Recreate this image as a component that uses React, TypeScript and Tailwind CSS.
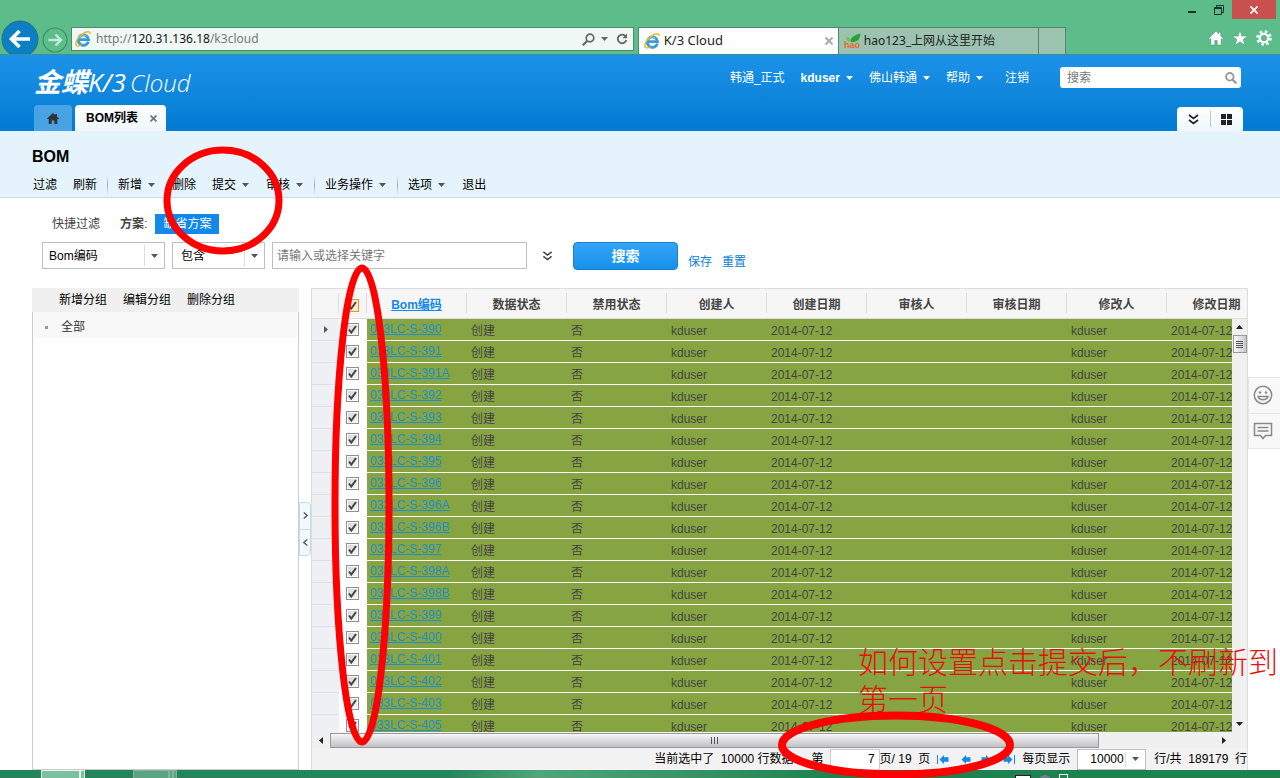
import React from "react";
import clsx from "clsx";

const bomCodes = [
  "033LC-S-390",
  "033LC-S-391",
  "033LC-S-391A",
  "033LC-S-392",
  "033LC-S-393",
  "033LC-S-394",
  "033LC-S-395",
  "033LC-S-396",
  "033LC-S-396A",
  "033LC-S-396B",
  "033LC-S-397",
  "033LC-S-398A",
  "033LC-S-398B",
  "033LC-S-399",
  "033LC-S-400",
  "033LC-S-401",
  "033LC-S-402",
  "033LC-S-403",
  "033LC-S-405",
];

const columns = [
  "数据状态",
  "禁用状态",
  "创建人",
  "创建日期",
  "审核人",
  "审核日期",
  "修改人",
  "修改日期",
];

const rowValues = ["创建", "否", "kduser", "2014-07-12", "", "", "kduser", "2014-07-12"];

const Caret = ({ className = "" }: { className?: string }) => (
  <svg
    className={clsx("h-1 w-[7px] shrink-0", className)}
    viewBox="0 0 7 4"
    fill="currentColor"
  >
    <path d="M0 0h7L3.5 4z" />
  </svg>
);

const DoubleChevron = ({ className = "" }: { className?: string }) => (
  <svg
    className={className}
    viewBox="0 0 11 11"
    fill="none"
    stroke="currentColor"
    strokeWidth="1.7"
  >
    <path d="M1 1l4.5 3.4L10 1M1 6l4.5 3.4L10 6" />
  </svg>
);

const IeLogo = () => (
  <svg className="h-4 w-4 shrink-0" viewBox="0 0 16 16" fill="none">
    <path
      d="M13.4 10.6A5.2 5.2 0 1 1 13.6 8.6H4.2"
      stroke="#3a9bd9"
      strokeWidth="2.8"
    />
    <path d="M4.4 6.6a4.4 4.4 0 0 1 7-1.6" stroke="#8fd0f2" strokeWidth="1" />
    <path
      d="M1.6 14.6C-.6 12.6 2.4 6.8 7 3.4 11 .4 15.6-.4 15 3.2"
      stroke="#e9b824"
      strokeWidth="1.5"
    />
    <path d="M1.4 14.2c1 1.2 3 .8 5-.4" stroke="#e9b824" strokeWidth="1.3" />
  </svg>
);

const HaoLogo = () => (
  <svg className="h-4 w-[17px] shrink-0" viewBox="0 0 17 16">
    <path d="M6.5 9C6 4.500 10 2 16.500.5 16.500 6 13 9.800 6.500 9z" fill="#2ba33c" />
    <path d="M7 9C3.500 9 2 7 2 3.500 5.500 4 7.200 6 7 9z" fill="#7cc242" />
    <text
      x="0"
      y="15"
      fontSize="9"
      fontWeight="bold"
      fontFamily="Liberation Sans, sans-serif"
      fill="#e8662a"
    >
      hao
    </text>
  </svg>
);

/* Browser window frame: caption buttons, address bar, tabs */
const BrowserChrome = () => (
  <div className="flex shrink-0 flex-col bg-[#5cbd8b] font-['Noto_Sans','Noto_Sans_CJK_SC',sans-serif] text-[13px] text-[#222]">
    <div className="flex h-[19px] justify-end pr-1">
      <button aria-label="最小化" className="flex w-[26px] items-end justify-center pb-[6px]">
        <span className="h-[2px] w-2 bg-[#1d2f26]" />
      </button>
      <button aria-label="还原" className="flex w-[27px] items-center justify-center">
        <svg className="h-[10px] w-[10px]" viewBox="0 0 10 10" fill="none" stroke="#1d2f26">
          <path d="M.5 2.500h7v7h-7zM.5 3.500h7M2.500 2V.5h7v7H8" />
        </svg>
      </button>
      <button
        aria-label="关闭"
        className="flex w-[44px] items-center justify-center bg-[#c8504f]"
      >
        <svg className="h-2 w-2" viewBox="0 0 8 8" stroke="#fff" strokeWidth="1.700">
          <path d="M.5.5l7 7M7.500.5l-7 7" />
        </svg>
      </button>
    </div>
    <div className="flex h-9 items-end overflow-hidden border-b border-[#3c8f8d] pl-[1px]">
      <button aria-label="后退" className="h-[34px] w-[38px] shrink-0">
        <svg className="h-[38px] w-[38px]" viewBox="0 0 38 38">
          <circle cx="19" cy="19" r="18" fill="#0b7fc4" stroke="#2b6f78" />
          <path
            d="M29 19H11M18.500 11l-8 8 8 8"
            fill="none"
            stroke="#fff"
            strokeWidth="3.600"
          />
        </svg>
      </button>
      <button aria-label="前进" className="ml-[3px] h-[28px] w-[26px] shrink-0">
        <svg className="h-[26px] w-[26px]" viewBox="0 0 26 26" fill="none">
          <circle cx="13" cy="13" r="12" stroke="#3d8f69" strokeWidth="1.200" />
          <path
            d="M6.500 13h12M13.500 7.500l5.500 5.500-5.500 5.500"
            stroke="#c5ead6"
            strokeWidth="2.400"
          />
        </svg>
      </button>
      <div className="mb-[3px] ml-[3px] flex h-[24px] w-[44%] items-center border border-[#4f8a6d] bg-[#eff8f4] px-[3px]">
        <IeLogo />
        <span className="ml-[5px] flex-1 text-xs text-[#777]">
          http://<span className="text-[#111]">120.31.136.18</span>/k3cloud
        </span>
        <svg
          className="h-[13px] w-[13px]"
          viewBox="0 0 13 13"
          fill="none"
          stroke="#666"
          strokeWidth="1.700"
        >
          <circle cx="8" cy="5" r="3.800" />
          <path d="M5.300 7.800L.8 12.300" strokeWidth="2.200" />
        </svg>
        <Caret className="mx-[6px] text-[#666]" />
        <svg
          className="mx-[2px] h-3 w-3"
          viewBox="0 0 12 12"
          fill="none"
          stroke="#666"
          strokeWidth="1.800"
        >
          <path d="M9.600 3.400A4.300 4.300 0 1 0 10.300 7" />
          <path d="M11 .5v4.800H6.300z" fill="#666" stroke="none" />
        </svg>
      </div>
      <div className="ml-1 flex h-[27px] w-[201px] items-center border-x border-t border-[#4f8a6d] bg-white px-[5px]">
        <IeLogo />
        <span className="ml-[4px] flex-1">K/3 Cloud</span>
        <button aria-label="关闭标签">
          <svg className="h-2 w-2" viewBox="0 0 8 8" stroke="#aaa" strokeWidth="2">
            <path d="M.5.5l7 7M7.500.5l-7 7" />
          </svg>
        </button>
      </div>
      <div className="flex h-[27px] w-[200px] items-center border-r border-t border-[#4f8a6d] bg-[#9cc3af] px-[5px] text-xs">
        <HaoLogo />
        <span className="ml-[3px]">hao123_上网从这里开始</span>
      </div>
      <div className="h-[27px] w-[27px] border-r border-t border-[#4f8a6d] bg-[#9cc3af]" />
      <div className="mb-2 ml-auto mr-2 flex gap-2 text-white">
        <svg className="h-4 w-4" viewBox="0 0 16 16" fill="currentColor" stroke="#3f8f69" strokeWidth=".5">
          <path d="M8 1L.8 8.200l1.200 1.200.8-.7V15h4v-4.500h2.400V15h4V8.700l.8.7 1.200-1.200-2.400-2.400V2.200h-2v1.600z" />
        </svg>
        <svg className="h-4 w-4" viewBox="0 0 16 16" fill="currentColor" stroke="#3f8f69" strokeWidth=".5">
          <path d="M8 .5l2 5.500h5.700l-4.500 3.500 1.700 5.700L8 11.800l-4.900 3.400 1.700-5.700L.3 6H6z" />
        </svg>
        <svg className="h-4 w-4" viewBox="0 0 16 16" fill="none" stroke="currentColor">
          <circle cx="8" cy="8" r="4.200" strokeWidth="2.200" />
          <circle cx="8" cy="8" r="6.500" strokeWidth="2.600" strokeDasharray="2.600 2.500" />
        </svg>
      </div>
    </div>
  </div>
);

const AppHeader = () => (
  <header className="shrink-0 bg-linear-to-b from-[#1c93e8] to-[#007bd1] pl-[34px] pr-[37px] text-white">
    <div className="flex h-[50px] items-center">
      <div className="flex items-baseline pt-1 font-['Open_Sans','Noto_Sans_CJK_SC',sans-serif] text-2xl italic leading-7">
        <span className="font-bold text-[27px]">金蝶</span>
        <span className="text-[26px] font-medium">K/3</span>
        <span className="ml-1 font-light">Cloud</span>
      </div>
      <nav className="ml-auto flex h-8 items-center gap-4 pb-[5px]">
        <span>韩通_正式</span>
        <button className="flex items-center font-bold">
          kduser
          <Caret className="ml-[6px]" />
        </button>
        <button className="flex items-center">
          佛山韩通
          <Caret className="ml-[6px]" />
        </button>
        <button className="flex items-center">
          帮助
          <Caret className="ml-[6px]" />
        </button>
        <a href="#logout" className="ml-[6px]">
          注销
        </a>
      </nav>
      <label className="mb-[5px] ml-[31px] mr-[2px] flex h-[21px] w-[181px] items-center rounded-[3px] bg-white pl-[7px] pr-1">
        <input
          type="text"
          aria-label="搜索"
          placeholder="搜索"
          className="min-w-0 flex-1 text-xs text-[#555] outline-none placeholder:text-[#777]"
        />
        <svg
          className="h-3 w-3"
          viewBox="0 0 12 12"
          fill="none"
          stroke="#999"
          strokeWidth="1.800"
        >
          <circle cx="4.800" cy="4.800" r="3.800" />
          <path d="M7.600 7.600L11.500 11.500" strokeWidth="2.200" />
        </svg>
      </label>
    </div>
    <div className="flex h-[26px] items-stretch">
      <button
        aria-label="主页"
        className="flex w-[38px] items-center justify-center rounded-t bg-[#48a3e4]"
      >
        <svg className="h-[11px] w-3" viewBox="0 0 12 11" fill="#333">
          <path d="M6 0L0 5.500l.8.8.9-.6V11h3V7.500h2.600V11h3V5.700l.9.600.8-.8-2-1.800V1H8.300v1.200z" />
        </svg>
      </button>
      <div className="ml-[3px] flex w-[91px] items-center rounded-t bg-linear-to-b from-white to-[#eef7fc] pl-[11px] font-bold text-black">
        BOM列表
        <button aria-label="关闭BOM列表" className="ml-3">
          <svg className="h-[7px] w-[7px]" viewBox="0 0 7 7" stroke="#777" strokeWidth="1.800">
            <path d="M.5.5l6 6M6.500.5l-6 6" />
          </svg>
        </button>
      </div>
      <div className="ml-auto mt-[2px] flex w-[66px] items-center rounded-t bg-linear-to-b from-white to-[#eef7fc] text-[#222]">
        <button aria-label="展开" className="flex flex-1 justify-center">
          <DoubleChevron className="h-[11px] w-[11px]" />
        </button>
        <span className="h-4 w-px bg-[#b9c3cb]" />
        <button aria-label="应用" className="flex flex-1 justify-center">
          <svg className="h-[11px] w-[11px]" viewBox="0 0 11 11" fill="currentColor">
            <path d="M0 0h5v5H0zM6 0h5v5H6zM0 6h5v5H0zM6 6h5v5H6z" />
          </svg>
        </button>
      </div>
    </div>
  </header>
);

const ToolButton = ({ label, menu = false }: { label: string; menu?: boolean }) => (
  <button className="flex items-center px-2">
    {label}
    {menu && <Caret className="ml-[6px] mr-px text-[#555]" />}
  </button>
);

const ToolDivider = () => (
  <span className="mx-[2px] h-5 w-px bg-linear-to-b from-transparent via-[#9aa9b4] to-transparent" />
);

const Toolbar = () => (
  <div className="shrink-0 border-b border-[#c5dbee] bg-[#e5f4fc] pb-1 pl-[25px] pt-[14px] text-black">
    <h1 className="px-[7px] text-base font-bold leading-6">BOM</h1>
    <div className="flex h-6 items-center pt-2">
      <ToolButton label="过滤" />
      <ToolButton label="刷新" />
      <ToolDivider />
      <ToolButton label="新增" menu />
      <ToolButton label="删除" />
      <ToolButton label="提交" menu />
      <ToolButton label="审核" menu />
      <ToolDivider />
      <ToolButton label="业务操作" menu />
      <ToolDivider />
      <ToolButton label="选项" menu />
      <ToolButton label="退出" />
    </div>
  </div>
);

type DropProps = {
  label: string;
  value: string;
  className: string;
  selectClass?: string;
};

const Drop = ({ label, value, className, selectClass = "" }: DropProps) => (
  <div className={clsx("relative border border-[#bfbfbf] bg-white", className)}>
    <select
      aria-label={label}
      className={clsx("h-full w-full appearance-none text-black outline-none", selectClass)}
    >
      <option>{value}</option>
    </select>
    <span className="pointer-events-none absolute inset-y-[2px] right-0 flex w-5 items-center justify-center border-l border-[#ddd]">
      <Caret className="text-[#555]" />
    </span>
  </div>
);

const FilterPanel = () => (
  <div className="shrink-0 pb-[18px] pl-[42px] pt-4">
    <div className="flex h-5 items-center pl-[10px] text-[#444]">
      <span>快捷过滤</span>
      <span className="ml-5">
        <b>方案</b>:
      </span>
      <button className="ml-2 h-5 bg-[#1188ea] px-2 text-white">缺省方案</button>
    </div>
    <div className="mt-2 flex h-7 items-start">
      <Drop label="字段" value="Bom编码" className="h-[27px] w-[123px]" selectClass="pl-[6px]" />
      <Drop
        label="条件"
        value="包含"
        className="ml-[7px] h-[27px] w-[93px]"
        selectClass="pl-2"
      />
      <input
        type="text"
        aria-label="关键字"
        placeholder="请输入或选择关键字"
        className="ml-[7px] h-[27px] w-[255px] border border-[#bfbfbf] px-1 outline-none placeholder:text-[#777]"
      />
      <button aria-label="更多条件" className="mx-[15px] self-center text-[#444]">
        <DoubleChevron className="h-[10px] w-[11px]" />
      </button>
      <button className="ml-[5px] h-7 w-[105px] rounded border border-[#1580d0] bg-linear-to-b from-[#33a4f5] to-[#1591ec] text-sm font-bold text-white">
        搜索
      </button>
      <a href="#save" className="ml-[10px] pt-3 text-[#1080d8]">
        保存
      </a>
      <a href="#reset" className="ml-[10px] pt-3 text-[#1080d8]">
        重置
      </a>
    </div>
  </div>
);

const GroupPanel = () => (
  <aside className="flex w-[267px] shrink-0 flex-col">
    <div className="flex h-6 items-center gap-4 bg-[#f0f0f0] pl-[27px] text-black">
      <button>新增分组</button>
      <button>编辑分组</button>
      <button>删除分组</button>
    </div>
    <div className="flex-1 border-x border-b border-[#ccc] px-px">
      <div className="flex h-[26px] items-center bg-[#f8f8f8] pl-[11px] pt-1 text-[#333]">
        <span className="mr-[13px] h-[3px] w-[3px] bg-[#999]" />
        全部
      </div>
    </div>
  </aside>
);

const Splitter = () => (
  <div className="flex w-[12px] shrink-0 flex-col items-stretch justify-center">
    <div className="flex h-[54px] flex-col rounded-r border border-[#c3dceb] bg-[#f1f9fe] text-[#555]">
      <button aria-label="展开分组" className="flex flex-1 items-center justify-center">
        <svg className="h-[7px] w-[5px]" viewBox="0 0 5 7" fill="none" stroke="currentColor" strokeWidth="1.300">
          <path d="M.7.5l3.500 3-3.500 3" />
        </svg>
      </button>
      <span className="h-px bg-[#c3dceb]" />
      <button aria-label="收起分组" className="flex flex-1 items-center justify-center">
        <svg className="h-[7px] w-[5px]" viewBox="0 0 5 7" fill="none" stroke="currentColor" strokeWidth="1.300">
          <path d="M4.300.5L.8 3.500l3.500 3" />
        </svg>
      </button>
    </div>
  </div>
);

const CheckBox = ({ label, head = false }: { label: string; head?: boolean }) => (
  <span className="relative block h-[13px] w-[13px]">
    <input
      type="checkbox"
      aria-label={label}
      defaultChecked
      className={clsx(
        "block h-[13px] w-[13px] appearance-none border",
        head
          ? "border-[#e0962e] bg-[#fdeccb]"
          : "border-[#8e8f8f] bg-linear-to-br from-[#cfd3d8] to-[#f8f8f8] ring-1 ring-inset ring-white",
      )}
    />
    <svg
      className="pointer-events-none absolute inset-0 h-[13px] w-[13px]"
      viewBox="0 0 13 13"
      fill="none"
      stroke="#444"
      strokeWidth="2"
    >
      <path d="M3 6.500l2.300 3L10 3" />
    </svg>
  </span>
);

const HeadCell = ({ children }: { children?: React.ReactNode }) => (
  <th className="h-[29px] border-b border-[#ddd] bg-[#f6f6f6] p-0 align-middle">
    <div className="flex h-5 items-center justify-center border-r border-[#ddd] pt-1">
      {children}
    </div>
  </th>
);

const BomTable = () => (
  <table className="w-[955px] table-fixed border-collapse text-left text-[#444]">
    <colgroup>
      <col className="w-[27px]" />
      <col className="w-[28px]" />
      <col className="w-[100px]" />
      {columns.map((name) => (
        <col key={name} className="w-[100px]" />
      ))}
    </colgroup>
    <thead>
      <tr>
        <HeadCell />
        <HeadCell>
          <CheckBox label="全选" head />
        </HeadCell>
        <HeadCell>
          <a href="#sort" className="text-[#1188ea] underline">
            Bom编码
          </a>
        </HeadCell>
        {columns.map((name) => (
          <HeadCell key={name}>{name}</HeadCell>
        ))}
      </tr>
    </thead>
    <tbody>
      {bomCodes.map((code, index) => (
        <tr key={code} className="h-[22px] border-b border-white bg-[#86a441]">
          <td className="border-b border-[#dcdfe6] bg-[#eef0f4] p-0">
            {index === 0 && (
              <svg className="mx-auto h-[7px] w-1" viewBox="0 0 4 7" fill="#556">
                <path d="M0 0l4 3.500L0 7z" />
              </svg>
            )}
          </td>
          <td className="border-b border-dashed border-[#ddd] bg-white p-0 pl-[7px]">
            <CheckBox label={code} />
          </td>
          <td className="p-0 pl-[3px] leading-5">
            <a href="#bom" className="text-[#1f8fc4] underline">
              {code}
            </a>
          </td>
          {rowValues.map((value, i) => (
            <td key={i} className="whitespace-nowrap p-0 pl-1 pt-[3px] leading-[18px]">
              {value}
            </td>
          ))}
        </tr>
      ))}
    </tbody>
  </table>
);

const VerticalScroll = () => (
  <div className="absolute bottom-0 right-0 top-[30px] flex w-[15px] flex-col items-center bg-[#f0f0f0]">
    <svg className="my-[6px] h-1 w-[7px]" viewBox="0 0 7 4" fill="#222">
      <path d="M0 4h7L3.500 0z" />
    </svg>
    <div className="flex h-[18px] w-[14px] flex-col items-center justify-center gap-px border border-[#999] bg-linear-to-r from-[#fafafa] to-[#c9c9cd]">
      <span className="h-px w-[7px] bg-[#555]" />
      <span className="h-px w-[7px] bg-[#555]" />
      <span className="h-px w-[7px] bg-[#555]" />
      <span className="h-px w-[7px] bg-[#555]" />
    </div>
    <Caret className="mb-[6px] mt-auto text-[#222]" />
  </div>
);

const HorizontalScroll = () => (
  <div className="flex h-4 shrink-0 items-center bg-[#f0f0f0]">
    <svg className="mx-[7px] h-[7px] w-1 shrink-0" viewBox="0 0 4 7" fill="#222">
      <path d="M4 0v7L0 3.500z" />
    </svg>
    <div className="h-[15px] flex-1">
      <div className="flex h-full w-[87%] items-center justify-center gap-[2px] border border-[#999] bg-linear-to-b from-[#f6f6f6] to-[#c2c2c6]">
        <span className="h-[7px] w-px bg-[#555]" />
        <span className="h-[7px] w-px bg-[#555]" />
        <span className="h-[7px] w-px bg-[#555]" />
      </div>
    </div>
    <svg className="ml-2 mr-[21px] h-[7px] w-1 shrink-0" viewBox="0 0 4 7" fill="#222">
      <path d="M0 0l4 3.500L0 7z" />
    </svg>
  </div>
);

type PageArrowProps = { label: string; back?: boolean; edge?: boolean };

const PageArrow = ({ label, back = false, edge = false }: PageArrowProps) => (
  <button aria-label={label}>
    <svg
      className={clsx("h-[9px] w-3", !back && "-scale-x-100")}
      viewBox="0 0 12 9"
      fill="#1188ea"
    >
      {edge && <path d="M0 0h1v9H0z" />}
      <path d="M2.500 4.500L7 0v2.300h4.500v4.400H7V9z" />
    </svg>
  </button>
);

const Pager = () => (
  <div className="flex h-[22px] shrink-0 items-center justify-end bg-[#f2f2f2] text-black">
    <span>当前选中了&nbsp; 10000 行数据</span>
    <span className="ml-[18px]">第</span>
    <input
      type="text"
      aria-label="页码"
      defaultValue="7"
      className="ml-[6px] h-[21px] w-[50px] border border-[#ccc] bg-white pr-1 text-right outline-none"
    />
    <span>页/&nbsp;19&nbsp; 页</span>
    <div className="mx-[7px] flex items-center gap-[10px]">
      <PageArrow label="首页" back edge />
      <PageArrow label="上一页" back />
      <PageArrow label="下一页" />
      <PageArrow label="末页" edge />
    </div>
    <span>每页显示</span>
    <Drop
      label="每页行数"
      value="10000"
      className="ml-[7px] h-[21px] w-[69px]"
      selectClass="pl-3"
    />
    <span className="ml-2">行/共&nbsp; 189179&nbsp; 行</span>
  </div>
);

const SideDock = () => (
  <div className="mt-[89px] flex h-[72px] w-8 shrink-0 flex-col border border-r-0 border-[#e6e6e6] bg-[#f8f8f8] text-[#888]">
    <button
      aria-label="表情"
      className="flex flex-1 items-center justify-center border-b border-[#e6e6e6] pr-[3px]"
    >
      <svg className="h-5 w-5" viewBox="0 0 20 20" fill="none" stroke="currentColor" strokeWidth="1.500">
        <circle cx="10" cy="10" r="8.700" />
        <path d="M5 11.500c1.500 4.300 8.500 4.300 10 0z" />
        <circle cx="7" cy="7.500" r="1.200" fill="currentColor" stroke="none" />
        <circle cx="13" cy="7.500" r="1.200" fill="currentColor" stroke="none" />
      </svg>
    </button>
    <button aria-label="反馈" className="flex flex-1 items-center justify-center pr-[3px]">
      <svg className="h-[18px] w-5" viewBox="0 0 20 18" fill="none" stroke="currentColor" strokeWidth="1.500">
        <path d="M1.500 1.500h17v12h-6L10 16.500 7.500 13.500h-6z" />
        <path d="M4.500 5.500h11M4.500 9h11" />
      </svg>
    </button>
  </div>
);

const Taskbar = () => (
  <div className="flex h-[8px] shrink-0 overflow-hidden bg-linear-to-r from-[#23865a] from-35% via-[#4fa57c] via-42% to-[#1d8250] to-65% pl-[41px]">
    <span className="h-4 w-[39px] border border-[#e4f5ec] bg-[#7cc09f]" />
    <span className="h-4 w-[5px] border border-[#e4f5ec] bg-[#7cc09f]" />
    <span className="ml-[48px] h-4 w-[36px] border border-[#7fb59b] bg-[#5da582]" />
    <span className="h-4 w-1 border border-[#7fb59b] bg-[#5da582]" />
    <span className="h-4 w-1 border border-[#7fb59b] bg-[#5da582]" />
    <div className="ml-auto mr-[212px] flex items-start gap-2">
      <span className="mt-[5px] h-3 w-[16px] border border-[#222] bg-white" />
      <span className="mt-[5px] h-3 w-3 rounded-full bg-[#6d7f92]" />
      <span className="mt-[4px] h-3 w-[9px] border border-white" />
    </div>
  </div>
);

/* Red marker strokes and the note, floating above the page */
const Annotations = () => (
  <div className="pointer-events-none absolute inset-0 overflow-hidden">
    <p className="absolute left-[858px] top-[642px] w-[422px] font-['Noto_Sans_CJK_SC',sans-serif] text-[30px] font-light leading-[37px] text-[#e8100c]">
      如何设置点击提交后，不刷新到第一页
    </p>
    <svg
      className="absolute left-0 top-0 h-[778px] w-[1280px]"
      viewBox="0 0 1280 778"
      fill="none"
      stroke="#f00"
      strokeWidth="7"
    >
      <ellipse cx="223" cy="200.500" rx="56" ry="50.500" />
      <ellipse cx="362" cy="505" rx="27" ry="237" />
      <ellipse cx="896" cy="745" rx="114" ry="29.500" strokeWidth="8" />
    </svg>
  </div>
);

export default function App() {
  return (
    <div className="relative flex h-screen flex-col overflow-hidden bg-white font-['Liberation_Sans','Noto_Sans_CJK_SC',sans-serif] text-xs">
      <BrowserChrome />
      <AppHeader />
      <Toolbar />
      <FilterPanel />
      <main className="flex min-h-0 flex-1 pl-8">
        <GroupPanel />
        <Splitter />
        <section className="flex min-w-0 flex-1 flex-col border border-b-0 border-[#ddd]">
          <div className="relative min-h-0 flex-1 overflow-hidden">
            <BomTable />
            <VerticalScroll />
          </div>
          <HorizontalScroll />
          <Pager />
        </section>
        <SideDock />
      </main>
      <Taskbar />
      <Annotations />
    </div>
  );
}
